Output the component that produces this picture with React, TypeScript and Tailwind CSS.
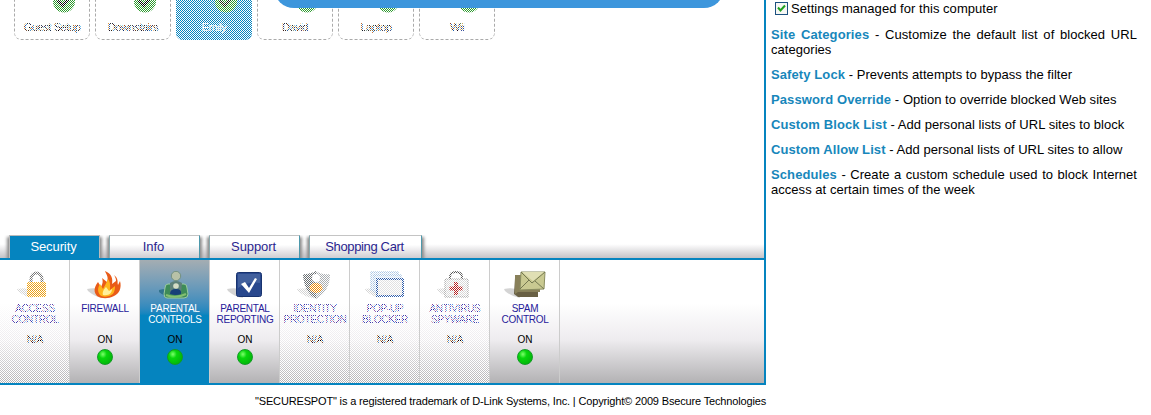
import type { ReactNode } from "react";

const CHECKER =
  "bg-[repeating-conic-gradient(#fff_0_25%,transparent_0_50%)] bg-[length:2px_2px]";

function Dither() {
  return <div className={`pointer-events-none absolute inset-0 ${CHECKER}`} />;
}

const profiles = [
  { name: "Guest Setup", active: false },
  { name: "Downstairs", active: false },
  { name: "Emily", active: true },
  { name: "David", active: false },
  { name: "Laptop", active: false },
  { name: "Wii", active: false },
];

function ProfileCard({ name, active }: { name: string; active: boolean }) {
  return (
    <div
      className={`relative flex h-[60px] w-[76px] flex-col items-center overflow-hidden rounded-[7px] pt-[10px] ${
        active ? "bg-[#0584bf]" : ""
      }`}
    >
      <svg className="ml-[24px] h-[23px] w-[22px] shrink-0" viewBox="0 0 22 22">
        <circle cx="11" cy="11" r="11" fill="#2c9a2c" />
        <path d="M5 10l5 5 7-9" fill="none" stroke={active ? "#1c2a10" : "#000"} strokeWidth="3" />
      </svg>
      <span className={`mt-[7px] text-[11px] leading-[14px] tracking-[-0.4px] whitespace-nowrap ${active ? "text-white" : "text-black"}`}>
        {name}
      </span>
      <Dither />
      {!active && <div className="absolute inset-0 rounded-[7px] border border-dashed border-[#aaa]" />}
    </div>
  );
}

function Tab({ label, width, active }: { label: string; width: string; active?: boolean }) {
  return (
    <div
      className={`flex h-[23px] items-center justify-center border-t border-r border-l pr-[2px] text-[13px] ${width} ${
        active
          ? "border-[#bbb] bg-[#0584bf] text-white"
          : "border-[#c4c4c4] border-r-[#4d98ab] border-l-[#8aa9ad] bg-linear-to-b from-white from-40% to-[#cfcdd2] text-[#2a1f8f]"
      } ${label.length > 10 ? "tracking-[-0.35px]" : "tracking-[-0.1px]"} shadow-[2px_2px_3px_#8b8b8b,-2px_2px_3px_#8b8b8b]`}
    >
      {label}
    </div>
  );
}

function Shadow() {
  return <path d="M0 18q9-2 14 1l2 8Q8 26 1 20z" fill="#c9c9c9" opacity=".8" />;
}

function LockIcon() {
  return (
    <svg width="36" height="28" viewBox="0 0 36 28">
      <Shadow />
      <path d="M14 13V8a5.500 6 0 0 1 11 0v5" fill="none" stroke="#777" strokeWidth="3" />
      <rect x="10" y="11" width="19" height="15" rx="1" fill="#f2a91c" />
      <path d="M10 15h19M10 19h19M10 23h19" stroke="#d68a10" />
    </svg>
  );
}

function FireIcon() {
  return (
    <svg width="36" height="28" viewBox="0 0 36 28">
      <Shadow />
      <path d="M10 25C5 19 9 14 11 11l3 5c2-4 2-6 1-9l5 4c2-5-1-8-2-11 7 3 8 8 7 13l4-3c0-3-1-4-2-6 5 4 3 7 4 10l2-4c2 7-1 13-6 15-6 3-12 3-17 0z" fill="#e95b18" />
      <path d="M13 24c-3-4-2-8 0-11l3 5c2-4 4-7 5-10 3 4 2 8 2 11l5-4c0 6-2 9-6 10-3 1-7 1-9-1z" fill="#ffb51c" />
      <path d="M16 24c-1-3 1-6 3-8l3 4 3-2c0 4-3 7-9 6z" fill="#fff09a" />
    </svg>
  );
}

function ParentIcon() {
  return (
    <svg width="36" height="28" viewBox="0 0 36 28">
      <path d="M2 19q7-2 12 0v7Q6 25 2 21z" fill="#31738d" />
      <path d="M11 13h16q3 0 3 4l1 6q0 4-4 4H10q-3 0-3-4l1-6q0-4 3-4z" fill="#3e8b58" stroke="#9bcba0" />
      <path d="M13 12q6-4 12 0l-1 11H13z" fill="#5e8078" />
      <circle cx="19" cy="5" r="4.700" fill="#b8c1a7" stroke="#739080" />
      <circle cx="19" cy="15" r="2.800" fill="#d5dcc5" />
      <path d="M13 23q0-5 6-5t5 5q-5 2-11 0z" fill="#173f78" />
      <path d="M9 24q10 4 20-1" fill="none" stroke="#84bf70" strokeWidth="2" />
    </svg>
  );
}

function ReportIcon() {
  return (
    <svg width="36" height="28" viewBox="0 0 36 28">
      <Shadow />
      <rect x="9.500" y="1.500" width="25" height="24" rx="2" fill="#29488d" stroke="#18336f" />
      <path d="M11 3h22v9Q22 10 11 17z" fill="#5874ac" opacity=".55" />
      <path d="M14 13l4-2 4 6 6-10 2 1-8 14z" fill="#fff" />
    </svg>
  );
}

function ShieldIcon() {
  return (
    <svg width="36" height="28" viewBox="0 0 36 28">
      <Shadow />
      <path d="M6 3q7 1 13-3 6 4 14 3 0 17-14 25Q7 21 6 3z" fill="#a9adb1" />
      <path d="M6 3q7 1 13-3v28Q7 21 6 3z" fill="#686d70" />
      <circle cx="19" cy="7" r="4" fill="#fff" />
      <ellipse cx="19" cy="17" rx="6.500" ry="5" fill="#ee8b08" />
    </svg>
  );
}

function PopupIcon() {
  return (
    <svg width="40" height="28" viewBox="0 0 40 28">
      <Shadow />
      <rect x="6" y="1" width="27" height="18" fill="#cfdef0" stroke="#8cafd7" />
      <rect x="9" y="4" width="27" height="17" fill="#cfdef0" stroke="#8cafd7" />
      <rect x="12" y="8" width="26" height="17" fill="#e1e1e2" stroke="#315eaa" strokeWidth="2" />
    </svg>
  );
}

function MedicalIcon() {
  return (
    <svg width="36" height="28" viewBox="0 0 36 28">
      <Shadow />
      <path d="M13 11V6q0-5 6-5t6 5v5" fill="none" stroke="#555" strokeWidth="2" />
      <path d="M8 8h23v18H8z" fill="#d9d9d9" stroke="#999" />
      <path d="M19 11v13M12.500 17.500h13" stroke="#b51d1d" strokeWidth="4" />
    </svg>
  );
}

function MailIcon() {
  return (
    <svg width="42" height="28" viewBox="0 0 42 28">
      <Shadow />
      <path d="M11 7h23v19H14l-4-3z" fill="#696044" />
      <path d="M11 4h25v17H14l-3 2z" fill="#88805a" />
      <path d="M17 1h24l-1 17-24 1z" fill="#c9c991" stroke="#8b8e61" />
      <path d="M17 1l11 11L41 1M16 18l9-9m15 9l-9-8" fill="none" stroke="#747851" />
      <path d="M18 1h22L29 10z" fill="#e0dfb4" />
    </svg>
  );
}

type Service = { lines: string[]; icon: ReactNode; state: "on" | "na" | "selected" };

const services: Service[] = [
  { lines: ["ACCESS", "CONTROL"], icon: <LockIcon />, state: "na" },
  { lines: ["FIREWALL"], icon: <FireIcon />, state: "on" },
  { lines: ["PARENTAL", "CONTROLS"], icon: <ParentIcon />, state: "selected" },
  { lines: ["PARENTAL", "REPORTING"], icon: <ReportIcon />, state: "on" },
  { lines: ["IDENTITY", "PROTECTION"], icon: <ShieldIcon />, state: "na" },
  { lines: ["POP-UP", "BLOCKER"], icon: <PopupIcon />, state: "na" },
  { lines: ["ANTIVIRUS", "SPYWARE"], icon: <MedicalIcon />, state: "na" },
  { lines: ["SPAM", "CONTROL"], icon: <MailIcon />, state: "on" },
];

function ServiceTile({ lines, icon, state }: Service) {
  const selected = state === "selected";
  return (
    <div
      className={`relative flex h-full w-[70px] flex-col items-center border-r border-[#ccc] pt-[11px] pl-px ${
        selected ? "bg-linear-to-b from-[#a4adb2] to-[#0584bf] to-45%" : ""
      }`}
    >
      <div className="flex h-[28px] shrink-0 justify-center">{icon}</div>
      <div
        className={`mt-[4px] flex h-[22px] flex-col items-center text-[10px] leading-[11px] tracking-[-0.25px] whitespace-nowrap ${
          selected ? "text-white" : "text-[#27209a]"
        }`}
      >
        {lines.map((line) => (
          <span key={line}>{line}</span>
        ))}
      </div>
      <span className="mt-[9px] text-[10px] leading-[12px] text-black">{state === "na" ? "N/A" : "ON"}</span>
      {state === "na" ? (
        <Dither />
      ) : (
        <div className="mt-[3px] size-[16px] rounded-full border border-[#129b25] bg-radial-[at_35%_30%] from-[#7dff6c] via-[#08d60b] via-30% to-[#00a80a]" />
      )}
    </div>
  );
}

const links = [
  { title: "Site Categories", text: "Customize the default list of blocked URL categories" },
  { title: "Safety Lock", text: "Prevents attempts to bypass the filter" },
  { title: "Password Override", text: "Option to override blocked Web sites" },
  { title: "Custom Block List", text: "Add personal lists of URL sites to block" },
  { title: "Custom Allow List", text: "Add personal lists of URL sites to allow" },
  { title: "Schedules", text: "Create a custom schedule used to block Internet access at certain times of the week" },
];

export default function App() {
  return (
    <div className="flex h-[415px] w-[1151px] overflow-hidden bg-white font-['Liberation_Sans',Arial,sans-serif]">
      <main className="flex h-full w-[766px] shrink-0 flex-col">
        <div className="flex h-[385px] flex-col border-r-2 border-b-2 border-[#0584bf]">
          <section className="relative h-[235px] shrink-0">
            <div className="-mt-[20px] flex gap-[5px] pl-[14px]">
              {profiles.map((profile) => (
                <ProfileCard key={profile.name} {...profile} />
              ))}
            </div>
            <div className="absolute -top-[32px] left-[274px] h-[40px] w-[450px] rounded-[22px] bg-[#3d96dc]" />
          </section>
          <nav className="flex h-[25px] shrink-0 gap-[9px] overflow-hidden border-b-2 border-[#0584bf] bg-linear-to-b from-white from-40% to-[#c5c3c7] pl-[9px]">
            <Tab label="Security" width="w-[91px]" active />
            <Tab label="Info" width="w-[91px]" />
            <Tab label="Support" width="w-[91px]" />
            <Tab label="Shopping Cart" width="w-[113px]" />
          </nav>
          <section className="flex min-h-0 flex-1 bg-linear-to-b from-white from-35% via-[#eeecef] via-65% to-[#b3b2b4]">
            {services.map((service) => (
              <ServiceTile key={service.lines.join(" ")} {...service} />
            ))}
          </section>
        </div>
        <footer className="flex h-[30px] justify-end pt-[10px] text-[11px] leading-[13px] tracking-[-0.16px] whitespace-nowrap text-black">
          <p className="w-[511px] [text-align-last:justify]">
            "SECURESPOT" is a registered trademark of D-Link Systems, Inc. | Copyright© 2009 Bsecure Technologies
          </p>
        </footer>
      </main>
      <aside className="flex w-[371px] flex-col gap-[10px] pt-px pl-[5px] text-[13px] leading-[15px] text-black">
        <label className="mb-px -mt-px flex items-center gap-[3px] pt-px pl-[4px] tracking-[0.04px]">
          <span className="-mt-px flex size-[13px] items-center justify-center border border-[#1c5180] bg-[#f7f7f4]">
            <svg width="9" height="9" viewBox="0 0 9 9">
              <path d="M1 3.500l2.500 3L8 1.500" fill="none" stroke="#21a121" strokeWidth="2" />
            </svg>
          </span>
          <span>Settings managed for this computer</span>
        </label>
        {links.map((link) => (
          <p key={link.title} className="text-justify tracking-[0.04px]">
            <b className="tracking-[0.1px] text-[#1787bb]">{link.title}</b> - {link.text}
          </p>
        ))}
      </aside>
    </div>
  );
}
